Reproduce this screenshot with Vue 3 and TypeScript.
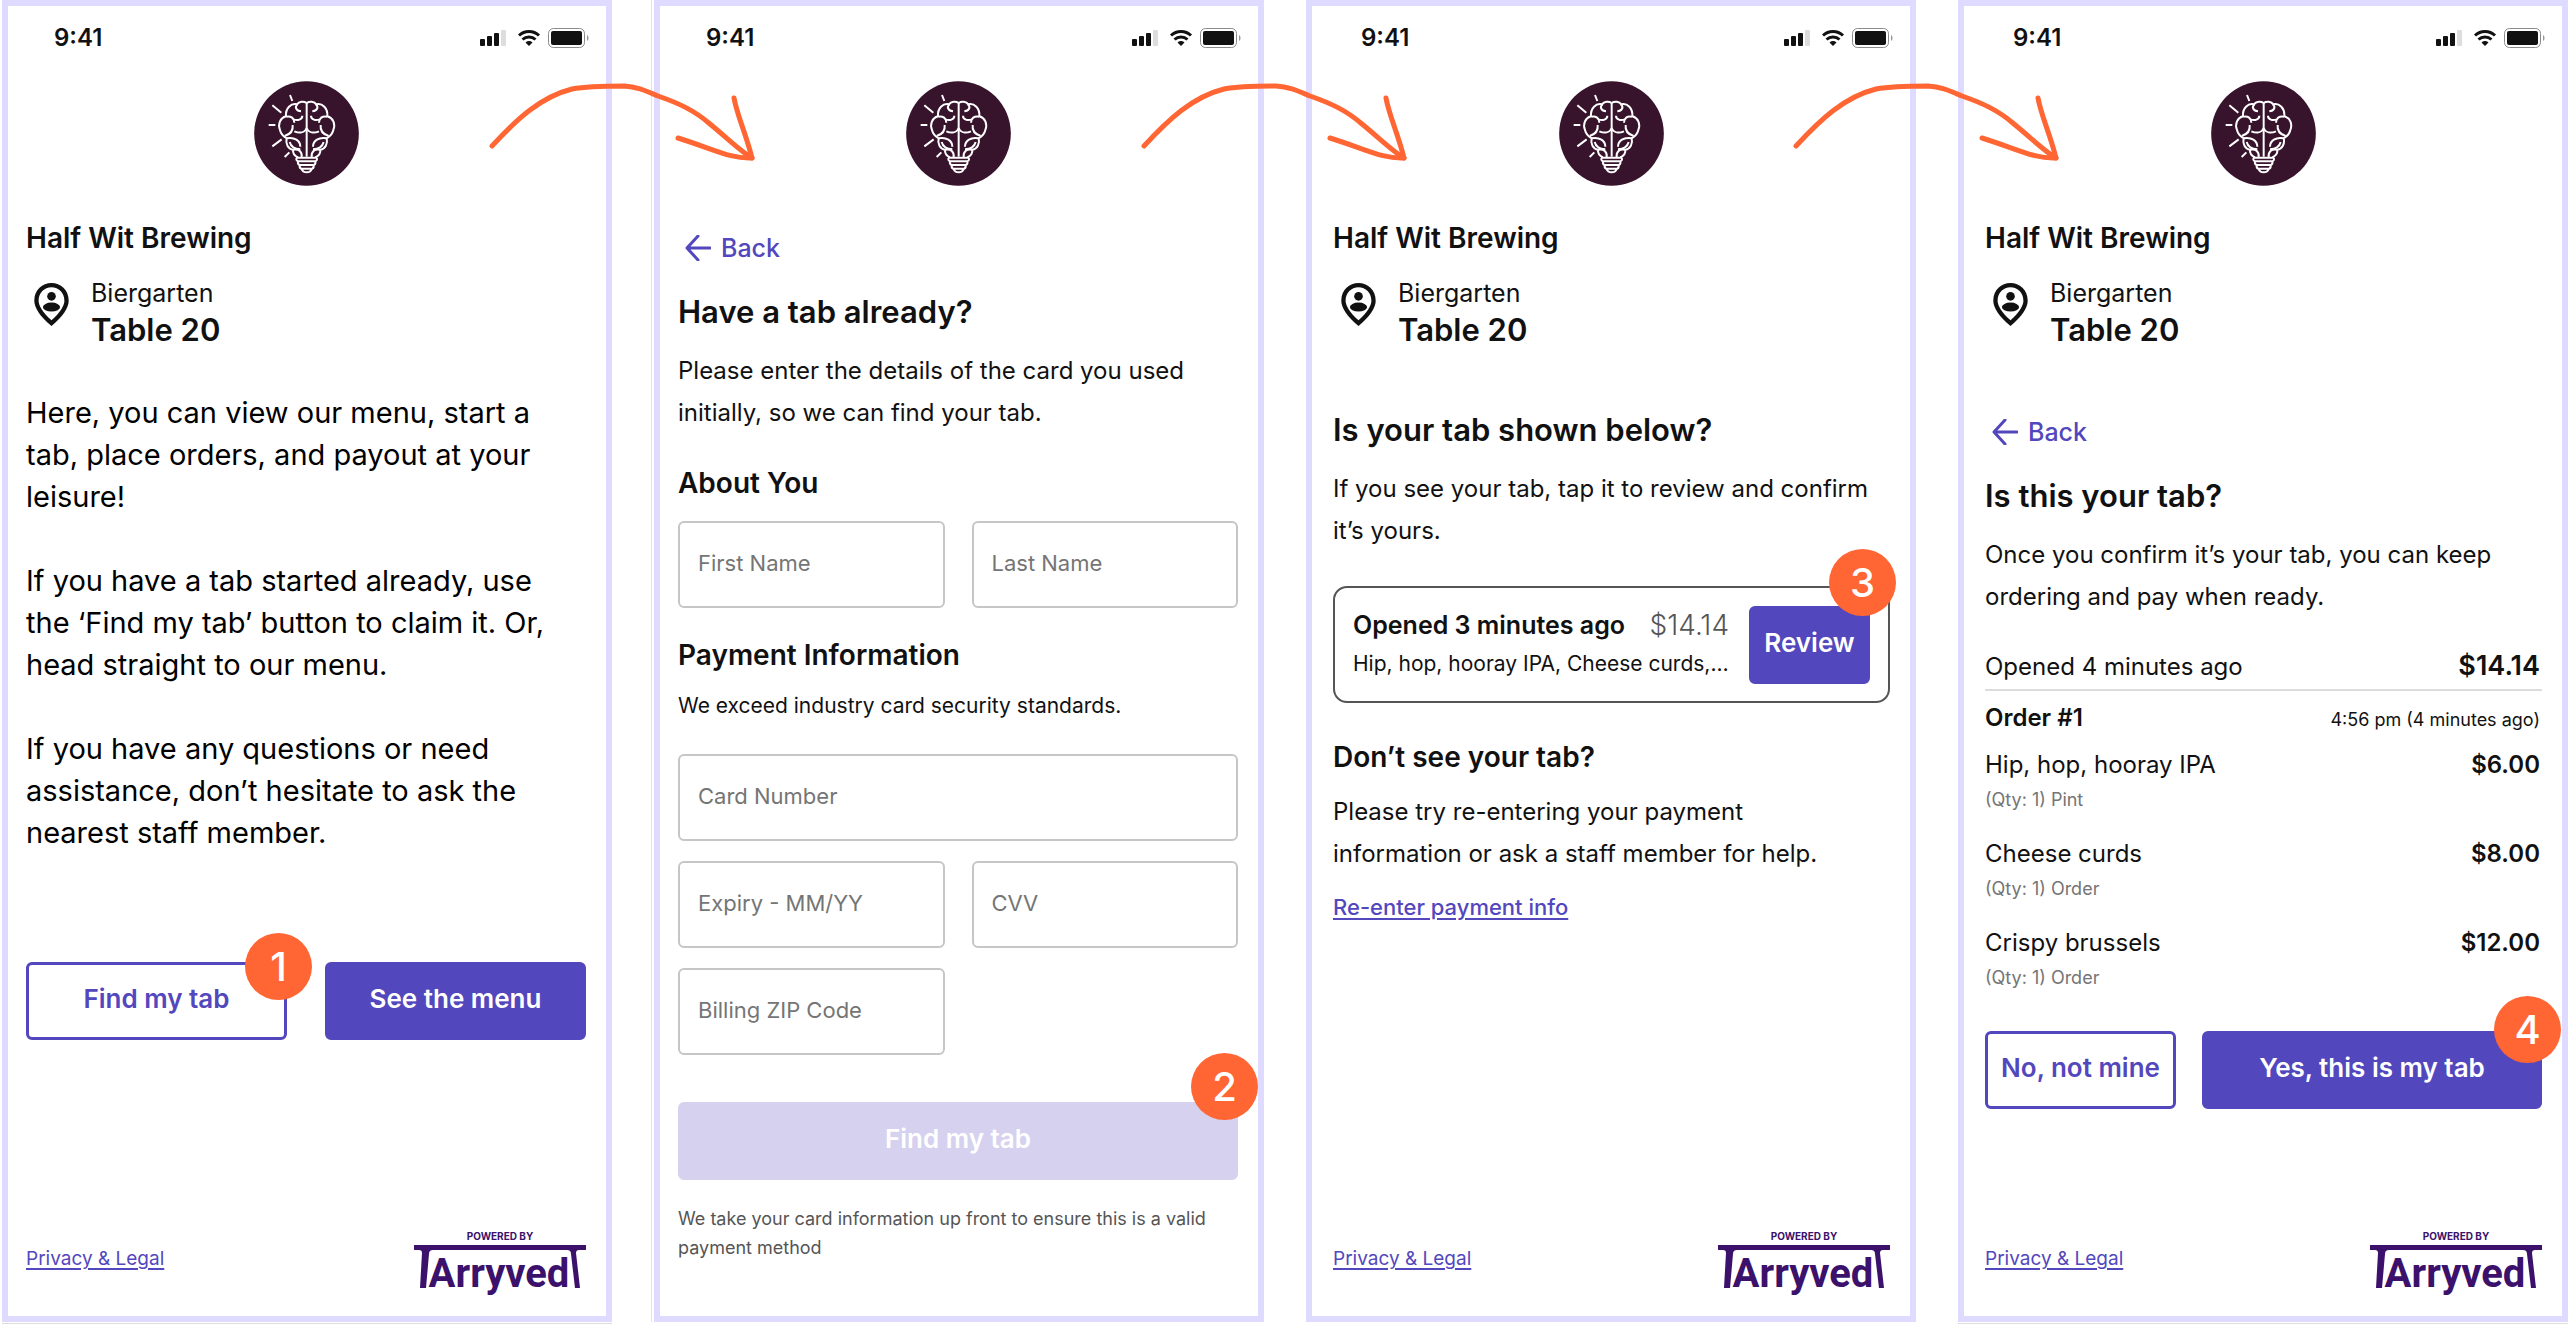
<script setup lang="ts">
type ScreenId = 'welcome' | 'find' | 'results' | 'confirm'

interface Screen {
  id: ScreenId
  located: boolean
  footer: boolean
}

interface Field {
  id: string
  label: string
  wide?: boolean
}

interface Item {
  name: string
  detail: string
  price: string
}

const screens: Screen[] = [
  { id: 'welcome', located: true, footer: true },
  { id: 'find', located: false, footer: false },
  { id: 'results', located: true, footer: true },
  { id: 'confirm', located: true, footer: true },
]

const intro: string[][] = [
  ['Here, you can view our menu, start a', 'tab, place orders, and payout at your', 'leisure!'],
  ['If you have a tab started already, use', 'the ‘Find my tab’ button to claim it. Or,', 'head straight to our menu.'],
  ['If you have any questions or need', 'assistance, don’t hesitate to ask the', 'nearest staff member.'],
]

const personFields: Field[] = [
  { id: 'first-name', label: 'First Name' },
  { id: 'last-name', label: 'Last Name' },
]

const cardFields: Field[] = [
  { id: 'card-number', label: 'Card Number', wide: true },
  { id: 'expiry', label: 'Expiry - MM/YY' },
  { id: 'cvv', label: 'CVV' },
  { id: 'zip', label: 'Billing ZIP Code' },
]

const items: Item[] = [
  { name: 'Hip, hop, hooray IPA', detail: '(Qty: 1) Pint', price: '$6.00' },
  { name: 'Cheese curds', detail: '(Qty: 1) Order', price: '$8.00' },
  { name: 'Crispy brussels', detail: '(Qty: 1) Order', price: '$12.00' },
]
</script>

<template>
  <main class="flow">
    <section v-for="(screen, index) in screens" :key="screen.id" class="screen" :class="screen.id">
      <svg v-if="index > 0" class="arrow" viewBox="0 0 270 90" aria-hidden="true">
        <path d="M4 67C28 41 52 18 84 10C100 7 118 7 136 7C150 8 158 12 170 17C190 24 206 31 222 45C238 58 252 72 264 79" />
        <path d="M246 19C249 36 258 55 264 79C243 80 228 71 190 59" />
      </svg>

      <div class="status">
        <span>9:41</span>
        <svg viewBox="0 0 109 20" width="109" height="20" aria-hidden="true">
          <g fill="#111">
            <rect x="0" y="11" width="5" height="7" rx="1" />
            <rect x="7" y="8" width="5" height="10" rx="1" />
            <rect x="14" y="5" width="5" height="13" rx="1" />
            <rect x="21" y="2" width="5" height="16" rx="1" fill="#ddd" />
            <path d="M45.500 14.500a5.500 5.500 0 0 1 7 0L49 18z" />
          </g>
          <g fill="none" stroke="#111" stroke-width="3">
            <path d="M39 7.500a14.500 14.500 0 0 1 20 0" />
            <path d="M42.500 11.500a9.500 9.500 0 0 1 13 0" />
          </g>
          <rect x="68.500" y="0.500" width="36" height="19" rx="5" fill="none" stroke="#8a8a8a" />
          <rect x="71" y="3" width="31" height="14" rx="2" fill="#111" />
          <path d="M107 7c2 1 2 5 0 6z" fill="#999" />
        </svg>
      </div>

      <svg class="brand" viewBox="39 33 315 315" role="img" aria-label="Half Wit Brewing">
        <circle cx="196.500" cy="190.500" r="157" fill="#37132c" />
        <g fill="none" stroke="#fff" stroke-width="6">
          <path d="M147 75l7 18M94 106l27 22M83 165h20M94 229l28-21M131 261l14-14" />
          <path d="M197 98v162" />
          <g v-for="side in ['left', 'right']" :key="side" :transform="side === 'right' ? 'translate(394 0) scale(-1 1)' : undefined">
            <path d="M197 99C188 93 174 94 168 103C150 99 133 114 135 139C117 144 110 162 117 180C120 193 128 200 137 205C133 221 141 237 156 239C155 250 161 258 171 262" />
            <path d="M169 103C160 112 166 123 180 124" />
            <path d="M136 140C150 137 160 145 160 158M184 137C184 149 170 153 157 148" />
            <path d="M155 165C157 181 147 193 131 198" />
            <path d="M197 174C191 189 175 190 160 184" />
            <path d="M137 205C160 200 178 212 178 230M146 216C149 228 160 237 178 238" />
            <path d="M156 239C174 235 184 246 182 262" />
          </g>
          <path d="M168 263h58c4 4 2 9-3 11h-52c-5-2-7-7-3-11zM172 274c-3 4-1 9 3 11h44c4-2 6-7 3-11M177 286c-2 4 0 8 3 10h34c3-2 5-6 3-10M182 297c4 13 26 13 30 0" />
        </g>
      </svg>

      <template v-if="screen.located">
        <h1 class="venue">Half Wit Brewing</h1>
        <div class="location">
          <svg viewBox="4 2 16 20" width="35" height="43" aria-hidden="true">
            <path fill="#111" fill-rule="evenodd" d="M12 2c4.200 0 8 3.220 8 8.200 0 3.320-2.670 7.250-8 11.800-5.330-4.550-8-8.480-8-11.800C4 5.220 7.800 2 12 2zm0 2c-3.350 0-6 2.570-6 6.200 0 2.340 1.950 5.440 6 9.140 4.050-3.700 6-6.790 6-9.140C18 6.570 15.350 4 12 4z" />
            <circle cx="12" cy="8.200" r="2" fill="#111" />
            <ellipse cx="12" cy="13.200" rx="4" ry="2.100" fill="#111" />
          </svg>
          <div>
            <p class="area">Biergarten</p>
            <p class="table-name">Table 20</p>
          </div>
        </div>
      </template>

      <template v-if="screen.id === 'welcome'">
        <div class="intro">
          <p v-for="(lines, n) in intro" :key="n">
            <template v-for="line in lines" :key="line">{{ line }}<br /></template>
          </p>
        </div>
        <div class="actions even">
          <div class="anchor">
            <button type="button" class="button outlined">Find my tab</button>
            <span class="badge">1</span>
          </div>
          <button type="button" class="button">See the menu</button>
        </div>
      </template>

      <template v-if="screen.id === 'find'">
        <a href="#" class="back">
          <svg viewBox="0 0 26 26" width="26" height="26" aria-hidden="true"><path d="M25 13H2M13 1L2 13l11 12" /></svg>Back
        </a>
        <h2 class="title">Have a tab already?</h2>
        <p class="body">Please enter the details of the card you used<br />initially, so we can find your tab.</p>
        <form class="form" @submit.prevent>
          <h3 class="subtitle">About You</h3>
          <div class="fields">
            <div v-for="field in personFields" :key="field.id" class="field">
              <input :id="field.id" type="text" />
              <label :for="field.id">{{ field.label }}</label>
            </div>
          </div>
          <h3 class="subtitle payment">Payment Information</h3>
          <p class="assurance">We exceed industry card security standards.</p>
          <div class="fields card-fields">
            <div v-for="field in cardFields" :key="field.id" class="field" :class="{ wide: field.wide }">
              <input :id="field.id" type="text" />
              <label :for="field.id">{{ field.label }}</label>
            </div>
          </div>
          <div class="anchor submit">
            <button type="submit" class="button" disabled>Find my tab</button>
            <span class="badge">2</span>
          </div>
        </form>
        <p class="note">We take your card information up front to ensure this is a valid<br />payment method</p>
      </template>

      <template v-if="screen.id === 'results'">
        <h2 class="title">Is your tab shown below?</h2>
        <p class="body">If you see your tab, tap it to review and confirm<br />it’s yours.</p>
        <div class="tab-card anchor">
          <div class="tab-info">
            <div class="tab-line">
              <strong>Opened 3 minutes ago</strong>
              <span class="amount">$14.14</span>
            </div>
            <p class="tab-items">Hip, hop, hooray IPA, Cheese curds,…</p>
          </div>
          <button type="button" class="button review">Review</button>
          <span class="badge">3</span>
        </div>
        <h3 class="subtitle missing">Don’t see your tab?</h3>
        <p class="body">Please try re-entering your payment<br />information or ask a staff member for help.</p>
        <a href="#" class="link retry">Re-enter payment info</a>
      </template>

      <template v-if="screen.id === 'confirm'">
        <a href="#" class="back">
          <svg viewBox="0 0 26 26" width="26" height="26" aria-hidden="true"><path d="M25 13H2M13 1L2 13l11 12" /></svg>Back
        </a>
        <h2 class="title">Is this your tab?</h2>
        <p class="body">Once you confirm it’s your tab, you can keep<br />ordering and pay when ready.</p>
        <div class="total">
          <span>Opened 4 minutes ago</span>
          <strong>$14.14</strong>
        </div>
        <div class="order-head">
          <strong>Order #1</strong>
          <span>4:56 pm (4 minutes ago)</span>
        </div>
        <table class="order">
          <tbody>
            <tr v-for="item in items" :key="item.name">
              <td>{{ item.name }}<small>{{ item.detail }}</small></td>
              <td class="price">{{ item.price }}</td>
            </tr>
          </tbody>
        </table>
        <div class="actions choice">
          <button type="button" class="button outlined">No, not mine</button>
          <div class="anchor">
            <button type="button" class="button">Yes, this is my tab</button>
            <span class="badge">4</span>
          </div>
        </div>
      </template>

      <footer v-if="screen.footer" class="footer">
        <a href="#" class="link legal">Privacy &amp; Legal</a>
        <svg class="arryved" viewBox="0 0 172 64" width="172" height="64" role="img" aria-label="Powered by Arryved">
          <text x="86" y="7" text-anchor="middle" class="powered">POWERED BY</text>
          <path d="M0 12h172v5h-7q-3 0-3 3l4 35h-5l-4-34q0-4-4-4H19q-4 0-4 4l-3 34H6l2-35q0-3-3-3H0z" />
          <text x="85" y="54" text-anchor="middle" class="wordmark">Arryved</text>
        </svg>
      </footer>
    </section>
  </main>
</template>

<style>
body {
  margin: 0;
  background: #fff;
}
</style>

<style scoped>
.flow {
  box-sizing: border-box;
  display: grid;
  grid-template-columns: repeat(4, minmax(0, 1fr));
  gap: 42px;
  min-height: 100vh;
  padding: 0 0 2px 2px;
  overflow: hidden;
  color: #111;
  font-family: Inter, "Noto Sans", sans-serif;
  font-size: 24px;
  line-height: 32px;
}

.screen {
  position: relative;
  display: flex;
  flex-direction: column;
  box-sizing: border-box;
  padding: 18px 20px 0 18px;
  border: 6px solid #dfdaff;
  background: #fff;
  white-space: nowrap;
}

.results,
.confirm {
  padding-left: 21px;
}

.find {
  box-shadow: -2px 0 #fff, -3px 0 #cfe6fb;
}

.welcome,
.confirm {
  box-shadow: 0 1px #fff, 0 2px #ddd;
}

h1,
h2,
h3,
p {
  margin: 0;
  font-weight: 400;
}

.arrow {
  position: absolute;
  z-index: 2;
  top: 73px;
  left: -172px;
  width: 270px;
  height: 90px;
  fill: none;
  stroke: #ff6634;
  stroke-width: 5;
  stroke-linecap: round;
  stroke-linejoin: round;
}

.status {
  display: flex;
  align-items: center;
  justify-content: space-between;
  height: 28px;
  margin-right: -3px;
  padding-left: 28px;
  font-weight: 600;
  line-height: 28px;
}

.brand {
  align-self: center;
  width: 105px;
  height: 105px;
  margin-top: 29px;
}

.venue {
  margin-top: 36px;
  font-size: 28px;
  font-weight: 600;
}

.location {
  display: flex;
  gap: 22px;
  margin-top: 21px;
  padding-left: 8px;
}

.location svg {
  margin-top: 8px;
}

.area {
  font-size: 25px;
  line-height: 36px;
}

.table-name {
  font-size: 31px;
  font-weight: 600;
  line-height: 38px;
}

.intro {
  display: grid;
  gap: 42px;
  margin-top: 43px;
  color: #000;
  font-size: 29px;
  line-height: 42px;
}

.actions {
  display: grid;
}

.even {
  grid-template-columns: 1fr 1fr;
  gap: 38px;
  margin-top: 108px;
}

.choice {
  grid-template-columns: 191px 1fr;
  gap: 26px;
  margin-top: 40px;
}

.anchor {
  position: relative;
}

.button {
  box-sizing: border-box;
  width: 100%;
  height: 78px;
  padding: 0 0 4px;
  border: 3px solid #5347bd;
  border-radius: 6px;
  background: #5347bd;
  color: #fff;
  font: 600 26px/32px Inter, "Noto Sans", sans-serif;
}

.outlined {
  background: #fff;
  color: #5347bd;
}

.button:disabled {
  border-color: #d6d1ee;
  background: #d6d1ee;
}

.badge {
  position: absolute;
  top: -29px;
  right: -25px;
  width: 67px;
  border-radius: 50%;
  background: #ff6634;
  color: #fff;
  font-size: 40px;
  font-weight: 500;
  line-height: 67px;
  text-align: center;
}

.submit .badge {
  top: -49px;
  right: -20px;
}

.tab-card .badge {
  top: -39px;
  right: -8px;
}

.choice .badge {
  top: -35px;
  right: -19px;
}

.back {
  display: flex;
  align-items: center;
  gap: 10px;
  padding-left: 7px;
  color: #5347bd;
  font-size: 25px;
  font-weight: 500;
  text-decoration: none;
}

.back svg {
  fill: none;
  stroke: currentColor;
  stroke-width: 3;
  stroke-linecap: round;
  stroke-linejoin: round;
}

.find .back {
  margin-top: 46px;
}

.confirm .back {
  margin-top: 67px;
}

.title {
  font-size: 31px;
  font-weight: 600;
  line-height: 40px;
}

.back + .title {
  margin-top: 28px;
}

.location + .title {
  margin-top: 61px;
}

.title + .body {
  margin-top: 18px;
}

.body {
  margin-top: 18px;
  line-height: 42px;
}

.form {
  margin-top: 33px;
}

.subtitle {
  font-size: 28px;
  font-weight: 600;
}

.payment {
  margin-top: 31px;
}

.assurance {
  margin-top: 21px;
  font-size: 21px;
  line-height: 28px;
}

.fields {
  display: grid;
  grid-template-columns: 1fr 1fr;
  gap: 20px 27px;
  margin-top: 22px;
}

.card-fields {
  margin-top: 34px;
}

.field {
  position: relative;
}

.wide {
  grid-column: 1 / -1;
}

.field input {
  display: block;
  box-sizing: border-box;
  width: 100%;
  height: 87px;
  padding: 0 20px;
  border: 2px solid #c6c6c6;
  border-radius: 6px;
  background: #fff;
  font: 22px/28px Inter, "Noto Sans", sans-serif;
}

.field label {
  position: absolute;
  top: 28px;
  left: 20px;
  color: #757575;
  font-size: 22px;
  line-height: 28px;
}

.submit {
  margin-top: 47px;
}

.note {
  margin-top: 24px;
  color: #555;
  font-size: 18px;
  line-height: 29px;
}

.tab-card {
  display: flex;
  align-items: center;
  justify-content: space-between;
  gap: 20px;
  box-sizing: border-box;
  height: 117px;
  margin-top: 34px;
  padding: 0 18px;
  border: 2px solid #555;
  border-radius: 14px;
}

.tab-info {
  flex: 1;
  padding-bottom: 2px;
}

.tab-line {
  display: flex;
  align-items: center;
  justify-content: space-between;
  line-height: 40px;
}

.tab-line strong {
  font-size: 25px;
  font-weight: 600;
}

.amount {
  color: #555;
  font-size: 28px;
  font-weight: 300;
}

.tab-items {
  font-size: 21px;
  line-height: 38px;
}

.review {
  width: 121px;
}

.missing {
  margin-top: 38px;
}

.link {
  align-self: flex-start;
  color: #5347bd;
  text-decoration: underline;
  text-decoration-thickness: 2px;
  text-underline-offset: 3px;
}

.retry {
  margin-top: 18px;
  font-size: 22px;
  font-weight: 500;
  line-height: 28px;
}

.total,
.order-head {
  display: flex;
  align-items: baseline;
  justify-content: space-between;
  padding-right: 2px;
}

.total {
  margin-top: 32px;
  padding-bottom: 6px;
  border-bottom: 2px solid #dcdcdc;
}

.total strong {
  font-size: 27px;
  font-weight: 600;
}

.order-head {
  margin-top: 11px;
}

.order-head strong {
  font-weight: 600;
}

.order-head span {
  font-size: 18px;
}

.order {
  margin-top: 13px;
  border-collapse: collapse;
}

.order td {
  padding: 0 0 25px;
  vertical-align: top;
}

.order tr:last-child td {
  padding-bottom: 0;
}

.order small {
  display: block;
  margin-top: 6px;
  color: #757575;
  font-size: 18px;
  line-height: 26px;
}

.order .price {
  padding-right: 2px;
  font-weight: 600;
  text-align: right;
}

.footer {
  display: flex;
  align-items: flex-end;
  justify-content: space-between;
  margin-top: auto;
  padding-bottom: 19px;
}

.legal {
  align-self: flex-end;
  margin-bottom: 25px;
  font-size: 19px;
  line-height: 26px;
}

.arryved {
  overflow: visible;
  fill: #3b116b;
}

.powered {
  font-size: 10px;
  font-weight: 700;
}

.wordmark {
  font-family: Roboto, sans-serif;
  font-size: 40px;
  font-weight: 700;
}
</style>
